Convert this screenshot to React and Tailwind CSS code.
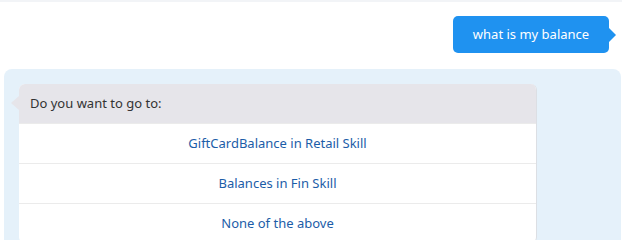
export default function App() {
  const options = ["GiftCardBalance in Retail Skill", "Balances in Fin Skill", "None of the above"];
  return (
    <div className="w-[622px] h-[240px] overflow-hidden bg-white" style={{ fontFamily: '"Noto Sans", "Open Sans", sans-serif' }}>
      <div className="h-[2px] bg-[#f2f4f7]" />
      <div className="flex justify-end pt-[14px] pr-[13px]">
        <div className="relative">
          <div className="h-[37px] w-[156px] rounded-[5px] bg-[#1f92f0] text-white text-[13px] flex items-center justify-center">
            what is my balance
          </div>
          <div className="absolute right-[-7px] top-[12px] w-0 h-0 border-y-[7px] border-y-transparent border-l-[7px] border-l-[#1f92f0]" />
        </div>
      </div>
      <div className="mt-[16px] ml-[4px] mr-[1px] h-[200px] rounded-t-[8px] bg-[#e5f1fa] pt-[15px] pl-[15px]">
        <div className="relative w-[518px]">
          <div className="absolute left-[-8px] top-[12px] w-0 h-0 border-y-[7px] border-y-transparent border-r-[8px] border-r-[#e6e5ea]" />
          <div className="rounded-[6px] overflow-hidden bg-white border-r border-[#dcdfe4]">
            <div className="h-[39px] bg-[#e6e5ea] px-[11px] flex items-center text-[13px] text-[#333333]">
              Do you want to go to:
            </div>
            {options.map((o) => (
              <div key={o} className="h-[40px] border-t border-[#ebebeb] first:border-t-0 flex items-center justify-center text-[13px] text-[#1c5da8]">
                {o}
              </div>
            ))}
          </div>
        </div>
      </div>
    </div>
  );
}
